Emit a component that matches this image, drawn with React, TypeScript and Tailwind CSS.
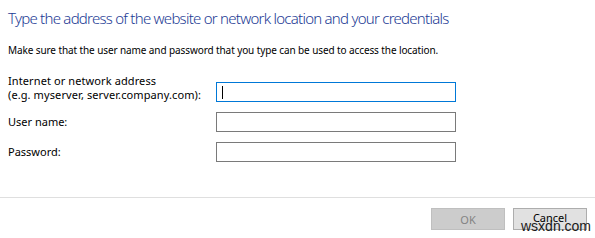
export default function App() {
  return (
    <div className="relative flex h-[238px] w-[595px] flex-col bg-white font-['Noto_Sans',sans-serif] text-[11px] text-black">
      <div className="flex flex-1 flex-col px-2">
        <h1 className="mt-[7px] text-[15px] font-light leading-[22px] tracking-[-0.75px] text-[#1c3a94]">
          Type the address of the website or network location and your credentials
        </h1>
        <p className="mt-[14px] text-[10px] leading-[14px] tracking-[-0.1px]">
          Make sure that the user name and password that you type can be used to access the location.
        </p>

        <div className="mt-[17px] flex items-end">
          <div className="w-[208px] leading-[14px] tracking-[0.1px]">
            <div>Internet or network address</div>
            <div>(e.g. myserver, server.company.com):</div>
          </div>
          <div className="flex h-[20px] w-[240px] items-center border border-[#0078d7] bg-white px-[5px]">
            <div className="h-[13px] w-px bg-black" />
          </div>
        </div>

        <div className="mt-[10px] flex items-center">
          <div className="w-[208px]">User name:</div>
          <div className="h-[20px] w-[240px] border border-[#7a7a7a] bg-white" />
        </div>

        <div className="mt-[10px] flex items-center">
          <div className="w-[208px]">Password:</div>
          <div className="h-[20px] w-[240px] border border-[#7a7a7a] bg-white" />
        </div>
      </div>

      <div className="border-t border-[#dfdfdf] pb-[8px] pt-[10px]">
        <div className="flex justify-end gap-[8px] pr-[8px]">
          <button
            type="button"
            disabled
            className="h-[22px] w-[74px] border border-[#bfbfbf] bg-[#cccccc] leading-none text-[#838383]"
          >
            OK
          </button>
          <button
            type="button"
            className="h-[22px] w-[74px] border border-[#adadad] bg-[#e1e1e1] pb-[4px] leading-none"
          >
            Cancel
          </button>
        </div>
      </div>

      <span className="pointer-events-none absolute left-[521px] top-[219px] font-['Liberation_Sans',sans-serif] text-[14px] leading-none text-[#1a1a1a]">
        wsxdn.com
      </span>
    </div>
  );
}
